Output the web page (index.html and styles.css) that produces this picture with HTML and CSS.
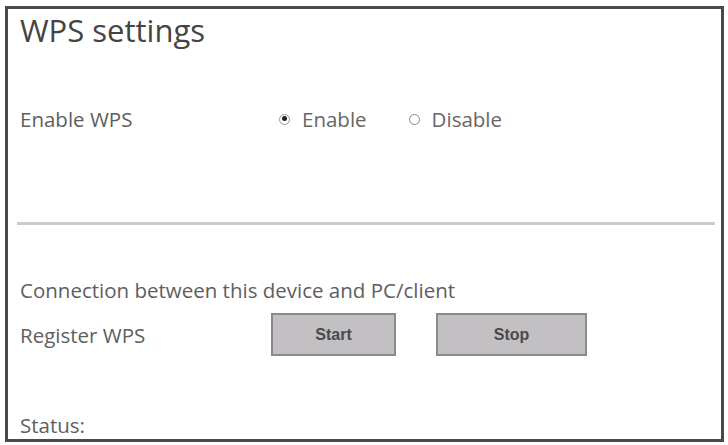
FILE: index.html
```html
<!DOCTYPE html>
<html lang="en">
<head>
    <meta charset="UTF-8">
    <meta name="viewport" content="width=device-width, initial-scale=1.0">
    <title>WPS settings</title>
    <link rel="stylesheet" href="styles.css">
</head>
<body>
    <div class="panel">
        <h1 class="title">WPS settings</h1>

        <!-- Activar / desactivar WPS -->
        <div class="row row-enable">
            <span class="label label-enable">Enable WPS</span>
            <label class="radio"><span class="dot checked"></span>Enable</label>
            <label class="radio radio-off"><span class="dot"></span>Disable</label>
        </div>

        <hr class="divider">

        <p class="note">Connection between this device and PC/client</p>
        <div class="row row-register">
            <span class="label label-register">Register WPS</span>
            <button type="button" class="btn btn-start">Start</button>
            <button type="button" class="btn btn-stop">Stop</button>
        </div>

        <p class="status">Status:</p>
    </div>
</body>
</html>
```

FILE: styles.css
```css
body {
    margin: 0;
    background: #fff;
    font-family: "Open Sans", "Noto Sans", sans-serif;
    color: #5e5e5e;
}
.panel {
    box-sizing: border-box;
    width: 719px;
    height: 436px;
    margin: 6px 0 0 5px;
    border: 3px solid #4a4a4a;
    padding: 0 0 0 12px;
    overflow: hidden;
}
.title {
    margin: 1px 0 0 0;
    font-size: 31px;
    font-weight: normal;
    color: #444;
    line-height: 40px;
}
.row {
    display: flex;
    align-items: center;
}
.row-enable {
    margin-top: 56px;
    height: 26px;
}
.label {
    font-size: 20.5px;
}
.label-enable {
    width: 259px;
}
.label-register {
    width: 251px;
}
.radio {
    display: flex;
    align-items: center;
    font-size: 20.5px;
    color: #666;
}
.radio-off {
    margin-left: 42px;
}
.dot {
    box-sizing: border-box;
    width: 11px;
    height: 11px;
    border: 1.5px solid #888;
    border-radius: 50%;
    margin-right: 12px;
    position: relative;
}
.dot.checked {
    border-color: #999;
}
.dot.checked::after {
    content: "";
    position: absolute;
    left: 1.5px;
    top: 1.5px;
    width: 5px;
    height: 5px;
    border-radius: 50%;
    background: #222;
}
.divider {
    margin: 90px 6px 0 -3px;
    border: none;
    height: 3px;
    background: #ccc;
}
.note {
    margin: 52px 0 0 0;
    font-size: 20.5px;
    line-height: 26px;
}
.row-register {
    margin-top: 10px;
}
.btn {
    box-sizing: border-box;
    height: 43px;
    background: #c2c0c2;
    border: 2px solid #8c8a8c;
    font-family: "Liberation Sans", Arial, sans-serif;
    font-size: 16px;
    font-weight: bold;
    color: #4a4a4a;
}
.btn-start {
    width: 125px;
}
.btn-stop {
    width: 151px;
    margin-left: 40px;
}
.status {
    margin: 56px 0 0 0;
    font-size: 20.5px;
    line-height: 26px;
}
```
